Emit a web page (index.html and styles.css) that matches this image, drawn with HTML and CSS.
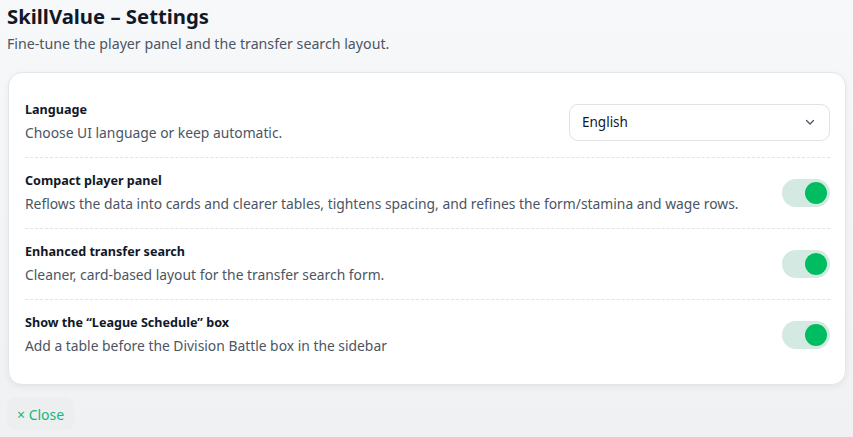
FILE: index.html
```html
<!DOCTYPE html>
<html lang="en">
<head>
<meta charset="utf-8">
<title>SkillValue – Settings</title>
<link rel="stylesheet" href="styles.css">
</head>
<body>
<div class="page">
  <h1 class="title">SkillValue – Settings</h1>
  <p class="subtitle">Fine-tune the player panel and the transfer search layout.</p>

  <div class="card">
    <div class="row">
      <div class="text">
        <div class="label">Language</div>
        <div class="desc">Choose UI language or keep automatic.</div>
      </div>
      <div class="select">
        <span>English</span>
        <svg class="chev" width="12" height="12" viewBox="0 0 12 12"><path d="M2.5 4.5 L6 8 L9.5 4.5" fill="none" stroke="#4b5563" stroke-width="1.3" stroke-linecap="round" stroke-linejoin="round"/></svg>
      </div>
    </div>
    <div class="row">
      <div class="text">
        <div class="label">Compact player panel</div>
        <div class="desc">Reflows the data into cards and clearer tables, tightens spacing, and refines the form/stamina and wage rows.</div>
      </div>
      <div class="toggle"><span class="knob"></span></div>
    </div>
    <div class="row">
      <div class="text">
        <div class="label">Enhanced transfer search</div>
        <div class="desc">Cleaner, card-based layout for the transfer search form.</div>
      </div>
      <div class="toggle"><span class="knob"></span></div>
    </div>
    <div class="row">
      <div class="text">
        <div class="label">Show the “League Schedule” box</div>
        <div class="desc">Add a table before the Division Battle box in the sidebar</div>
      </div>
      <div class="toggle"><span class="knob"></span></div>
    </div>
  </div>

  <button class="close">× Close</button>
</div>
</body>
</html>
```

FILE: styles.css
```css
* { box-sizing: border-box; }
html, body { margin: 0; padding: 0; }
body {
  background: linear-gradient(#f7f8fa, #f0f1f3);
  min-height: 437px;
  font-family: "Noto Sans", "Open Sans", sans-serif;
  color: #1f2937;
}
.page { padding: 2px 7px 8px 7px; }
.title {
  margin: 0;
  font-size: 20.3px;
  line-height: 28px;
  font-weight: 700;
  color: #111827;
}
.subtitle {
  margin: 1px 0 0 0;
  font-size: 14.2px;
  line-height: 26px;
  color: #4b5563;
}
.card {
  margin: 15px 0 0 1px;
  background: #fff;
  border: 1px solid #e3e5e9;
  border-radius: 14px;
  box-shadow: 0 2px 6px rgba(15, 23, 42, 0.06);
  padding: 14px 15px 14px 16px;
}
.row {
  display: flex;
  align-items: center;
  justify-content: space-between;
  gap: 16px;
  padding: 14px 0;
  border-bottom: 1px dashed #e1e3e7;
}
.row:last-child { border-bottom: none; }
.label {
  font-size: 12.6px;
  line-height: 17px;
  font-weight: 700;
  color: #111827;
}
.desc {
  margin-top: 5px;
  font-size: 13.85px;
  line-height: 20px;
  color: #4b5563;
}
.select {
  width: 261px;
  height: 37px;
  border: 1px solid #dfe2e6;
  border-radius: 9px;
  display: flex;
  align-items: center;
  justify-content: space-between;
  padding: 0 13px 0 12px;
  font-size: 13.5px;
  color: #111827;
  background: #fff;
}
.toggle {
  width: 48px;
  height: 28px;
  border-radius: 14px;
  background: #d3e9e1;
  flex: none;
  display: flex;
  align-items: center;
  justify-content: flex-end;
  padding-right: 3px;
}
.knob {
  width: 22px;
  height: 22px;
  border-radius: 50%;
  background: #00bd62;
}
.close {
  margin-top: 13px;
  height: 32px;
  padding: 0 10px;
  border: none;
  border-radius: 8px;
  background: #eceef0;
  color: #10b981;
  font-family: "Noto Sans", "Open Sans", sans-serif;
  font-size: 14px;
}
```
